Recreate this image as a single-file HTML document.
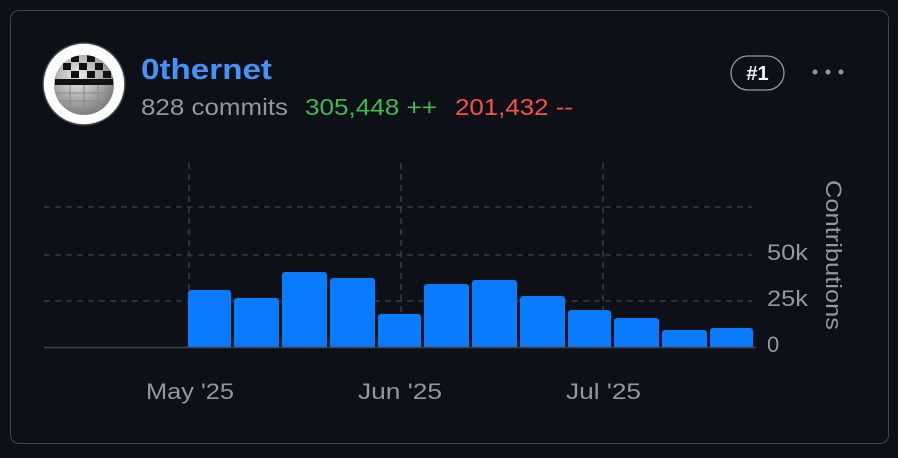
<!DOCTYPE html>
<html><head><style>
body{margin:0;background:#0d1117;width:898px;height:458px;overflow:hidden;font-family:"Liberation Sans",sans-serif}
.card{position:absolute;left:10px;top:10px;width:879px;height:434px;border:1.5px solid #3d444d;border-radius:9px;box-sizing:border-box}
</style></head><body>
<div class="card"></div>
<svg width="898" height="458" style="position:absolute;left:0;top:0">
<defs><clipPath id="c"><circle cx="84" cy="85" r="30"/></clipPath>
<radialGradient id="g" cx="0.4" cy="0.35" r="0.7"><stop offset="0" stop-color="#eee"/><stop offset="1" stop-color="#777"/></radialGradient></defs>
<circle cx="84" cy="84" r="41" fill="#fff" stroke="#3d444d" stroke-width="1.5"/>
<circle cx="84" cy="85" r="30" fill="url(#g)"/>
<g clip-path="url(#c)">
<g fill="#111">
<rect x="71" y="55" width="8" height="7"/><rect x="87" y="55" width="8" height="7"/>
<rect x="63" y="63" width="8" height="7"/><rect x="79" y="63" width="8" height="7"/><rect x="95" y="63" width="8" height="7"/>
<rect x="71" y="71" width="8" height="7"/><rect x="87" y="71" width="8" height="7"/><rect x="103" y="71" width="8" height="7"/>
<rect x="55" y="79" width="58" height="6"/>
</g>
<g stroke="#888" stroke-width="1"><line x1="52" y1="93" x2="116" y2="93"/><line x1="52" y1="101" x2="116" y2="101"/><line x1="52" y1="109" x2="116" y2="109"/><line x1="70" y1="85" x2="70" y2="118"/><line x1="84" y1="85" x2="84" y2="118"/><line x1="98" y1="85" x2="98" y2="118"/></g>
</g>
<text x="141" y="79" font-size="29" font-weight="bold" fill="#4493f8" textLength="131" lengthAdjust="spacingAndGlyphs">0thernet</text>
<text x="141" y="115" font-size="23" fill="#9198a1" textLength="147" lengthAdjust="spacingAndGlyphs">828 commits</text>
<text x="305" y="115" font-size="23" fill="#3fb950" textLength="132" lengthAdjust="spacingAndGlyphs">305,448 ++</text>
<text x="455" y="115" font-size="23" fill="#f85149" textLength="118" lengthAdjust="spacingAndGlyphs">201,432 --</text>
<rect x="731" y="56" width="53" height="34" rx="17" fill="none" stroke="#9198a1" stroke-width="1.3"/>
<text x="757.5" y="80" font-size="20" font-weight="bold" fill="#f0f6fc" text-anchor="middle">#1</text>
<circle cx="815" cy="72" r="2.5" fill="#9198a1"/><circle cx="828" cy="72" r="2.5" fill="#9198a1"/><circle cx="841" cy="72" r="2.5" fill="#9198a1"/>
<g stroke="#3d444d" stroke-width="1.3" stroke-dasharray="6 5">
<line x1="44" y1="207" x2="752" y2="207"/><line x1="44" y1="255" x2="752" y2="255"/><line x1="44" y1="301" x2="752" y2="301"/>
<line x1="189" y1="163" x2="189" y2="347"/><line x1="401" y1="163" x2="401" y2="347"/><line x1="603" y1="163" x2="603" y2="347"/>
</g>
<g fill="#0a7aff">
<path d="M188 347V293a3 3 0 0 1 3-3h37a3 3 0 0 1 3 3V347z"/>
<path d="M234 347V301a3 3 0 0 1 3-3h39a3 3 0 0 1 3 3V347z"/>
<path d="M282 347V275a3 3 0 0 1 3-3h39a3 3 0 0 1 3 3V347z"/>
<path d="M330 347V281a3 3 0 0 1 3-3h39a3 3 0 0 1 3 3V347z"/>
<path d="M378 347V317a3 3 0 0 1 3-3h37a3 3 0 0 1 3 3V347z"/>
<path d="M424 347V287a3 3 0 0 1 3-3h39a3 3 0 0 1 3 3V347z"/>
<path d="M472 347V283a3 3 0 0 1 3-3h39a3 3 0 0 1 3 3V347z"/>
<path d="M520 347V299a3 3 0 0 1 3-3h39a3 3 0 0 1 3 3V347z"/>
<path d="M568 347V313a3 3 0 0 1 3-3h37a3 3 0 0 1 3 3V347z"/>
<path d="M614 347V321a3 3 0 0 1 3-3h39a3 3 0 0 1 3 3V347z"/>
<path d="M662 347V333a3 3 0 0 1 3-3h39a3 3 0 0 1 3 3V347z"/>
<path d="M710 347V331a3 3 0 0 1 3-3h37a3 3 0 0 1 3 3V347z"/>
</g>
<line x1="44" y1="347.5" x2="756" y2="347.5" stroke="#3d444d" stroke-width="1.5"/>
<g font-size="22" fill="#9198a1">
<text x="767" y="260" textLength="41" lengthAdjust="spacingAndGlyphs">50k</text>
<text x="767" y="306" textLength="41" lengthAdjust="spacingAndGlyphs">25k</text>
<text x="767" y="352">0</text>
<text x="146" y="399" textLength="88" lengthAdjust="spacingAndGlyphs">May '25</text>
<text x="358" y="399" textLength="84" lengthAdjust="spacingAndGlyphs">Jun '25</text>
<text x="566" y="399" textLength="75" lengthAdjust="spacingAndGlyphs">Jul '25</text>
<text transform="translate(826,180) rotate(90)" textLength="150" lengthAdjust="spacingAndGlyphs">Contributions</text>
</g>
</svg>
</body></html>
